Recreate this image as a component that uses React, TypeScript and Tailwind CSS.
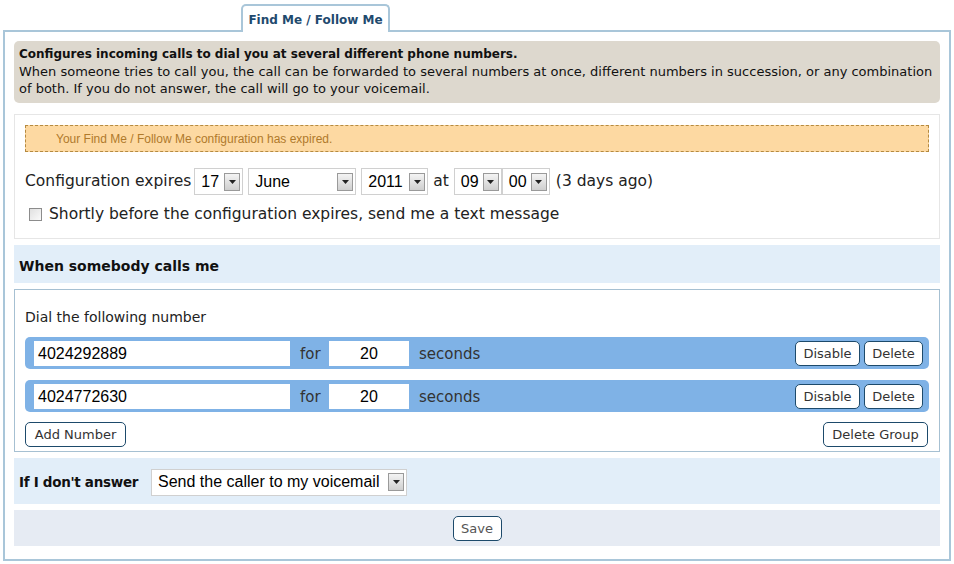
import React from "react";

const gothic = { fontFamily: '"DejaVu Sans", Verdana, sans-serif' };

function Arrow() {
  return (
    <span className="flex h-[18px] w-[16px] items-center justify-center border border-[#9a9a9a] bg-gradient-to-b from-[#f4f4f4] to-[#cfcfcf]">
      <svg width="7" height="4" viewBox="0 0 7 4"><path d="M0 0h7L3.5 4z" fill="#222" /></svg>
    </span>
  );
}

function Sel({ value, w, className = "" }: { value: string; w: string; className?: string }) {
  return (
    <div className={`flex h-[27px] items-center justify-between border border-[#d0d0d0] bg-white pl-[6px] pr-[2px] font-['Liberation_Sans'] text-[16px] text-black ${w} ${className}`}>
      <span>{value}</span>
      <Arrow />
    </div>
  );
}

function Btn({ children, className = "" }: { children: React.ReactNode; className?: string }) {
  return (
    <div className={`flex h-[25px] items-center justify-center rounded-[5px] border border-[#1d4a6b] bg-white px-[7px] text-[13px] text-[#333] ${className}`} style={gothic}>
      {children}
    </div>
  );
}

function NumRow({ num }: { num: string }) {
  return (
    <div className="flex h-[32px] items-center rounded-[5px] bg-[#7fb2e6] pl-[9px] pr-[6px]">
      <div className="flex h-[25px] w-[256px] items-center bg-white pl-[4px] pt-[1px] font-['Liberation_Sans'] text-[16px] text-black">{num}</div>
      <span className="ml-[10px] w-[29px] pt-[2px] text-[15px] text-[#333]" style={gothic}>for</span>
      <div className="flex h-[25px] w-[80px] items-center justify-center bg-white pt-[1px] font-['Liberation_Sans'] text-[16px] text-black">20</div>
      <span className="ml-[10px] pt-[2px] text-[15px] text-[#333]" style={gothic}>seconds</span>
      <div className="ml-auto flex gap-[4px]">
        <Btn className="w-[65px]">Disable</Btn>
        <Btn className="w-[59px]">Delete</Btn>
      </div>
    </div>
  );
}

export default function App() {
  return (
    <div className="h-[564px] w-[954px] bg-white pt-[4px]" style={gothic}>
      <div className="flex h-[26px] items-end">
        <div className="relative top-[2px] z-10 ml-[241px] flex h-[28px] w-[149px] items-center justify-center whitespace-nowrap rounded-t-[5px] border-x-2 border-t-2 border-[#a9c6d9] bg-white pt-[1px] text-[12px] font-bold text-[#1f4a6e]">
          Find Me / Follow Me
        </div>
      </div>
      <div className="mx-[3px] h-[531px] border-2 border-[#a9c6d9] px-[9px] pt-[9px]">
        <div className="rounded-[5px] bg-[#ddd8ce] px-[5px] pb-[6px] pt-[5px] text-[13px] leading-[17px] text-[#111]">
          <div className="text-[12px] font-bold">Configures incoming calls to dial you at several different phone numbers.</div>
          <div>When someone tries to call you, the call can be forwarded to several numbers at once, different numbers in succession, or any combination of both. If you do not answer, the call will go to your voicemail.</div>
        </div>

        <div className="mt-[11px] border border-[#e6e6e6] px-[10px] pb-[12px] pt-[10px]">
          <div className="flex h-[27px] items-center border border-dashed border-[#b58a40] bg-[#fdd9a2] pl-[30px] font-['Liberation_Sans'] text-[12px] text-[#b07a2c]">
            Your Find Me / Follow Me configuration has expired.
          </div>
          <div className="mt-[16px] flex items-center text-[15.5px] text-[#222]">
            <span className="mr-[3px]">Configuration expires</span>
            <Sel value="17" w="w-[49px]" />
            <Sel value="June" w="w-[108px]" className="ml-[5px]" />
            <Sel value="2011" w="w-[67px]" className="ml-[5px]" />
            <span className="ml-[5px] mr-[5px]">at</span>
            <Sel value="09" w="w-[48px]" />
            <Sel value="00" w="w-[48px]" />
            <span className="ml-[6px]">(3 days ago)</span>
          </div>
          <div className="mt-[8px] flex items-center text-[15.5px] text-[#222]">
            <span className="ml-[4px] mr-[7px] h-[13px] w-[13px] border border-[#8c8c8c] bg-gradient-to-br from-[#e0e0e0] to-[#fafafa]" />
            Shortly before the configuration expires, send me a text message
          </div>
        </div>

        <div className="mt-[6px] flex h-[38px] items-center bg-[#e2eef9] pl-[5px] pt-[4px] text-[14px] font-bold text-[#111]">
          When somebody calls me
        </div>

        <div className="mt-[6px] border border-[#a6c0d2] px-[10px] pb-[4px] pt-[17px]">
          <div className="text-[14px] text-[#222]">Dial the following number</div>
          <div className="mt-[9px] flex flex-col gap-[11px]">
            <NumRow num="4024292889" />
            <NumRow num="4024772630" />
          </div>
          <div className="mt-[10px] flex justify-between">
            <Btn className="w-[101px]">Add Number</Btn>
            <Btn className="mr-[1px] w-[105px]">Delete Group</Btn>
          </div>
        </div>

        <div className="mt-[6px] flex h-[46px] items-center bg-[#e2eef9] pl-[5px] pt-[2px]">
          <span className="w-[132px] text-[13.5px] font-bold tracking-[-0.3px] text-[#111]">If I don't answer</span>
          <Sel value="Send the caller to my voicemail" w="w-[256px]" />
        </div>

        <div className="mt-[6px] flex h-[36px] items-center justify-center bg-[#e6ebf3]">
          <Btn className="w-[49px] text-[#555]">Save</Btn>
        </div>
      </div>
    </div>
  );
}
